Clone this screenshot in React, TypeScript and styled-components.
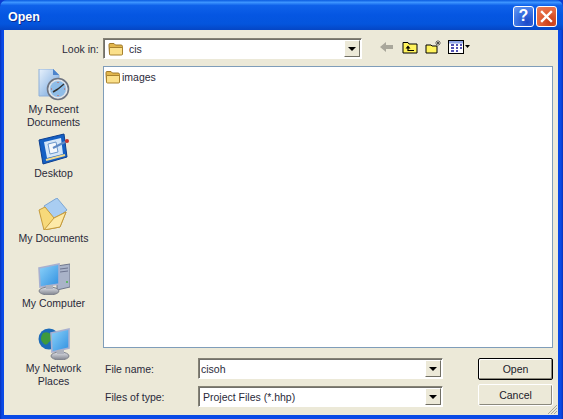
import React from "react";
import styled, { createGlobalStyle } from "styled-components";

const Global = createGlobalStyle`
  html, body { margin: 0; padding: 0; background: #0a3cd0; }
  body { width: 563px; height: 419px; overflow: hidden; font-family: "Liberation Sans", Arial, sans-serif; }
  #root { width: 563px; height: 419px; }
`;

const Win = styled.div`
  width: 563px; height: 419px; display: flex; flex-direction: column; box-sizing: border-box;
  background: linear-gradient(90deg, #0831b8 0, #0a4ae6 2px, #0a4ae6 561px, #0831b8 563px); border-radius: 7px 7px 0 0; overflow: hidden;
`;
const TitleBar = styled.div`
  height: 30px; flex: none; display: flex; align-items: center; justify-content: space-between;
  padding: 0 6px 0 8px; box-sizing: border-box;
  background: linear-gradient(180deg, #0a5be0 0%, #3d95ff 8%, #0f62ea 18%, #0556e2 50%, #0455dd 80%, #0546c4 100%);
`;
const Title = styled.span`
  color: #fff; font-size: 12.5px; font-weight: 700; text-shadow: 1px 1px 0 #0a2a90; position: relative; top: 2px;
`;
const TitleButtons = styled.div` display: flex; gap: 2px; position: relative; top: 1px; `;
const CapButton = styled.div<{ $close?: boolean }>`
  width: 21px; height: 21px; box-sizing: border-box; border: 1px solid #fff; border-radius: 3px;
  display: flex; align-items: center; justify-content: center; color: #fff; font-weight: 700; font-size: 16px;
  background: ${p => p.$close
    ? "radial-gradient(circle at 70% 80%, #c73a14, #e5683f 60%, #e77c5d)"
    : "radial-gradient(circle at 70% 80%, #1a48c8, #3f78e6 60%, #6d9cf0)"};
`;
const Client = styled.div`
  flex: none; height: 385px; margin: 0 5px 0 4px; background: #ece9d8; display: flex; box-sizing: border-box; position: relative;
`;
const Sidebar = styled.div`
  width: 99px; flex: none; display: flex; flex-direction: column; align-items: center; padding-top: 39px; box-sizing: border-box;
`;
const Place = styled.div<{ $h: number }>`
  height: ${p => p.$h}px; width: 92px; display: flex; flex-direction: column; align-items: center;
  font-size: 10.5px; line-height: 13px; color: #2a2a3a; text-align: center;
`;
const PlaceIcon = styled.svg`
  width: 32px; height: 32px; flex: none; margin-bottom: 2px;
`;
const Main = styled.div`
  flex: 1; display: flex; flex-direction: column; padding: 8px 5px 0 0; min-width: 0; position: relative; top: 0;
`;
const LookRow = styled.div` height: 21px; display: flex; align-items: center; flex: none; margin-left: -99px; padding-left: 58px; `;
const Label = styled.span<{ $w?: number }>`
  font-size: 10.5px; color: #2a2a3a; ${p => p.$w ? `width:${p.$w}px;` : ""} flex: none;
`;
const Combo = styled.div<{ $w: number; $pad?: number }>`
  width: ${p => p.$w}px; height: 21px; flex: none; box-sizing: border-box; display: flex; align-items: center;
  background: #fff; border: 1px solid; border-color: #858275 #fff #fff #858275; box-shadow: inset 1px 1px 0 #71706a;
  font-size: 10.5px; color: #2a2a3a; position: relative; padding-left: ${p => p.$pad ?? 2}px;
`;
const ComboArrow = styled.div`
  position: absolute; right: 1px; top: 1px; bottom: 1px; width: 16px; background: #ece9d8; box-sizing: border-box;
  border: 1px solid; border-color: #fff #716f64 #716f64 #fff; display: flex; align-items: center; justify-content: center;
  &::after { content: ""; border: 4px solid transparent; border-top: 4px solid #000; border-bottom: 0; }
`;
const Tools = styled.div` display: flex; align-items: center; margin-left: 17px; position: relative; top: -2px; `;
const Tool = styled.svg<{ $gap?: number }>` width: 16px; height: 16px; flex: none; margin-right: ${p => p.$gap ?? 7}px; `;
const ComboFolder = styled.svg<{ $gap?: number }>` width: 16px; height: 16px; margin-right: ${p => p.$gap ?? 5}px; flex: none; `;
const FileList = styled.div`
  margin-top: 7px; height: 282px; width: 450px; box-sizing: border-box; flex: none;
  background: #fff; border: 1px solid #7f9db9; padding: 2px 1px;
`;
const FileItem = styled.div` display: flex; align-items: center; font-size: 10.5px; color: #2a2a3a; height: 16px; `;
const Bottom = styled.div` margin-top: 10px; display: flex; justify-content: space-between; width: 450px; `;
const Fields = styled.div` display: flex; flex-direction: column; gap: 7px; padding-left: 2px; `;
const FieldRow = styled.div` display: flex; align-items: center; height: 21px; `;
const Buttons = styled.div` display: flex; flex-direction: column; gap: 4px; `;
const Btn = styled.div<{ $def?: boolean }>`
  width: 75px; height: 22px; box-sizing: border-box; display: flex; align-items: center; justify-content: center;
  font-size: 10.5px; color: #1a1a2a; border-radius: 2px; background: #ece9d8;
  border: 1px solid ${p => p.$def ? "#000" : "#fff"};
  box-shadow: inset -1px -1px 0 #8b897c${p => p.$def ? ", inset 1px 1px 0 #fff" : ""};
`;
const Grip = styled.svg` position: absolute; right: 0; bottom: 0; width: 12px; height: 12px; `;

const Folder = () => (
  <>
    <path d="M1 5 V3.5 Q1 2.5 2 2.5 H6 L7.5 4 H13 Q14.5 4 14.5 5.5 V13 H1.5 Z" fill="#e2b64c" stroke="#a07a2a" strokeWidth="1" />
    <path d="M1.5 6.5 H14.5 V13 Q14.5 14 13.5 14 H2.5 Q1.5 14 1.5 13 Z" fill="#fbe08a" stroke="#a8822e" strokeWidth="1" />
  </>
);

export default function App() {
  return (
    <Win>
      <Global />
      <TitleBar>
        <Title>Open</Title>
        <TitleButtons>
          <CapButton>?</CapButton>
          <CapButton $close>
            <svg width="13" height="13" viewBox="0 0 13 13"><path d="M2 2 L11 11 M11 2 L2 11" stroke="#fff" strokeWidth="2.4" strokeLinecap="square" /></svg>
          </CapButton>
        </TitleButtons>
      </TitleBar>
      <Client>
        <Sidebar>
          <Place $h={64}>
            <PlaceIcon viewBox="0 0 32 32">
              <defs>
                <linearGradient id="doc" x1="0" y1="0" x2="1" y2="1"><stop offset="0" stopColor="#e8f2fc" /><stop offset="1" stopColor="#6fa2dc" /></linearGradient>
                <linearGradient id="scr" x1="0" y1="0" x2="1" y2="1"><stop offset="0" stopColor="#8fd4fa" /><stop offset="1" stopColor="#2f8fe0" /></linearGradient>
                <linearGradient id="base" x1="0" y1="0" x2="0" y2="1"><stop offset="0" stopColor="#e2e4ea" /><stop offset="1" stopColor="#7d818b" /></linearGradient>
              </defs>
              <path d="M1 0 H15 L21 6 V27 H1 Z" fill="url(#doc)" stroke="#8fb0d8" />
              <path d="M15 0 L15 6 H21 Z" fill="#4c84cc" />
              <circle cx="20" cy="20" r="10.5" fill="#dfe4ea" stroke="#6e7480" strokeWidth="1.6" />
              <circle cx="20" cy="20" r="8" fill="#8fbde8" />
              <path d="M20 20 L26 15 M20 20 L15 23" stroke="#333" strokeWidth="1.5" />
              <path d="M20 13 v1 M27 20 h-1 M20 27 v-1 M13 20 h1" stroke="#d2553c" strokeWidth="1" />
            </PlaceIcon>
            My Recent<br />Documents
          </Place>
          <Place $h={65}>
            <PlaceIcon viewBox="0 0 32 32">
              <path d="M1 7 L26 1 L29 24 L5 31 Z" fill="#1560c4" stroke="#0c3f90" />
              <path d="M6 9 L23 5 L25 21 L9 25 Z" fill="#d4e6f8" />
              <path d="M10 11 L18 9 L20 19 L12 21 Z" fill="#f4f8fc" stroke="#6d98cc" />
              <path d="M15 15 L29 8" stroke="#5f89c4" strokeWidth="2" />
              <circle cx="29" cy="8" r="2" fill="#c8342c" />
              <path d="M8 27 L27 22" stroke="#f2d98c" strokeWidth="2" />
            </PlaceIcon>
            Desktop
          </Place>
          <Place $h={65}>
            <PlaceIcon viewBox="0 0 32 32">
              <path d="M6 8 L19 0 L29 12 L16 22 Z" fill="#a9cdf2" stroke="#7ca6d4" />
              <path d="M1 12 L7 9 L16 20 L26 15 L28 14 L22 29 L6 32 Z" fill="#f7d97a" stroke="#c49a3c" />
              <path d="M16 20 L28 14 L22 29 L6 32 Z" fill="#fde9a8" stroke="#c49a3c" />
            </PlaceIcon>
            My Documents
          </Place>
          <Place $h={65}>
            <PlaceIcon viewBox="0 0 32 32">
              <path d="M19 3 L32 1 V24 L19 27 Z" fill="#a9b3c8" stroke="#70788c" />
              <path d="M22 6 L30 5 M22 9 L30 8" stroke="#6e7690" />
              <path d="M1 5 L21 1 V21 L2 24 Z" fill="url(#scr)" stroke="#a8b0d0" strokeWidth="1.6" />
              <ellipse cx="11" cy="28" rx="10" ry="4" fill="url(#base)" stroke="#7d818b" />
              <rect x="8" y="22" width="7" height="4" fill="#aeb2bd" />
              <circle cx="29" cy="19" r="1" fill="#4cb848" />
            </PlaceIcon>
            My Computer
          </Place>
          <Place $h={60}>
            <PlaceIcon viewBox="0 0 32 32">
              <circle cx="11" cy="11" r="10.5" fill="#1d6cb8" />
              <path d="M5 5 Q11 3 13 7 Q16 11 11 14 Q8 19 5 15 Q1 11 5 5 Z" fill="#3f9a3c" />
              <path d="M13 5 L31 1 V20 L14 24 Z" fill="url(#scr)" stroke="#a8b0d0" strokeWidth="1.6" />
              <ellipse cx="22" cy="28" rx="9" ry="4" fill="url(#base)" stroke="#7d818b" />
              <rect x="19" y="22" width="7" height="4" fill="#aeb2bd" />
            </PlaceIcon>
            My Network<br />Places
          </Place>
        </Sidebar>
        <Main>
          <LookRow>
            <Label $w={41}>Look in:</Label>
            <Combo $w={259} $pad={4}>
              <ComboFolder viewBox="0 0 16 16"><Folder /></ComboFolder>
              cis
              <ComboArrow />
            </Combo>
            <Tools>
              <Tool viewBox="0 0 16 16"><path d="M1 8 L7 3 V6 H14 V10 H7 V13 Z" fill="#a9a79b" /></Tool>
              <Tool viewBox="0 0 16 16"><path d="M1 3.5 H6 L7 5 H15 V14 H1 Z" fill="#fff35c" stroke="#000" /><path d="M6 6.5 L8.5 9.5 H3.5 Z" fill="#000" /><path d="M6 9 V11.5 H12" stroke="#000" strokeWidth="1.2" fill="none" /></Tool>
              <Tool viewBox="0 0 16 16"><path d="M1 6 H6 L7 7 H12 V14 H1 Z" fill="#fff35c" stroke="#000" /><path d="M13 1 V7 M10 4 H16 M11 2 L15 6 M15 2 L11 6" stroke="#333" strokeWidth=".7" /></Tool>
              <Tool viewBox="0 0 16 16" $gap={1}><rect x=".5" y="1.5" width="15" height="13" fill="#fff" stroke="#000" /><rect x="1" y="2" width="14" height="2.5" fill="#8fa6e8" /><path d="M3 6 h3 M3 9 h3 M3 12 h3 M8 6 h2 M8 9 h2 M8 12 h2 M12 6 h2 M12 9 h2" stroke="#1a1a9a" strokeWidth="1.6" /></Tool>
              <svg width="5" height="3" viewBox="0 0 5 3"><path d="M0 0 H5 L2.5 3 Z" fill="#000" /></svg>
            </Tools>
          </LookRow>
          <FileList>
            <FileItem>
              <ComboFolder viewBox="0 0 16 16" $gap={1}><Folder /></ComboFolder>
              images
            </FileItem>
          </FileList>
          <Bottom>
            <Fields>
              <FieldRow>
                <Label $w={93}>File name:</Label>
                <Combo $w={245}>cisoh<ComboArrow /></Combo>
              </FieldRow>
              <FieldRow>
                <Label $w={93}>Files of type:</Label>
                <Combo $w={245} $pad={4}>Project Files (*.hhp)<ComboArrow /></Combo>
              </FieldRow>
            </Fields>
            <Buttons>
              <Btn $def>Open</Btn>
              <Btn>Cancel</Btn>
            </Buttons>
          </Bottom>
        </Main>
        <Grip viewBox="0 0 12 12"><path d="M11 2 L2 11 M11 5 L5 11 M11 8 L8 11" stroke="#a8a698" strokeWidth="1" /></Grip>
      </Client>
    </Win>
  );
}
